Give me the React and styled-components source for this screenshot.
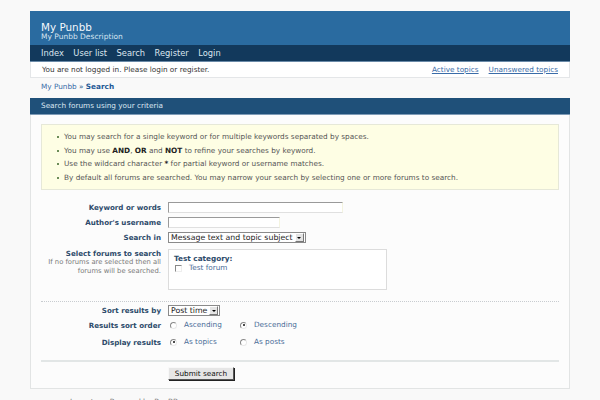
import React from 'react';
import styled, { createGlobalStyle } from 'styled-components';

const GlobalStyle = createGlobalStyle`
  html, body {
    margin: 0;
    padding: 0;
    background: #f9f9f9;
    font-family: "DejaVu Sans", Verdana, sans-serif;
    font-size: 7.3px;
    color: #333;
  }
`;

const Page = styled.div`
  width: 540px;
  margin: 0 auto;
  padding: 11px 0 0;
`;

const Header = styled.div`
  background: #2a6ba0;
  height: 34px;
  padding: 10px 11px 0;
  box-sizing: border-box;
  color: #fff;
`;

const Title = styled.div`
  font-size: 10.4px;
  line-height: 12px;
  font-weight: 500;
  color: #f4f8fc;
`;

const Tagline = styled.div`
  font-size: 7.5px;
  line-height: 8px;
  color: #d6e4f1;
`;

const Nav = styled.ul`
  display: flex;
  gap: 9.5px;
  margin: 0;
  padding: 0 11px;
  list-style: none;
  height: 16px;
  align-items: center;
  background: #12395c;
  border-bottom: 1px solid #6a8aa8;
  font-size: 8.3px;
  color: #dbe5ef;
`;

const StatusBar = styled.div`
  display: flex;
  align-items: center;
  height: 15px;
  padding: 0 11px;
  background: #fff;
  border: 1px solid #e4e6e8;
  border-top: none;
`;

const StatusLinks = styled.div`
  margin-left: auto;
  display: flex;
  gap: 10px;
`;

const Link = styled.a`
  color: ${(p) => (p.$strong ? '#1f5a96' : '#3a6ca8')};
  font-weight: ${(p) => (p.$strong ? 'bold' : 'normal')};
  text-decoration: ${(p) => (p.$under ? 'underline' : 'none')};
`;

const Crumbs = styled.div`
  padding: 0 11px;
  height: 20px;
  line-height: 17px;
  color: #2a5a90;
`;

const SectionHead = styled.div`
  background: #1f5079;
  height: 17px;
  line-height: 16px;
  padding: 0 11px;
  color: #dbe6f1;
  border-bottom: 1px solid #7e9bb6;
  box-sizing: border-box;
`;

const Box = styled.div`
  background: #fcfcfc;
  border: 1px solid #e2e4e4;
  border-top: none;
  padding: 9px 10px 8px;
`;

const InfoBox = styled.ul`
  margin: 0;
  padding: 5px 0 5px 22px;
  background: #fefee4;
  border: 1px solid #e6e8d8;
  list-style: none;
  color: #555;
`;

const InfoItem = styled.li`
  position: relative;
  line-height: 13.6px;
  &::before {
    content: '';
    position: absolute;
    left: -7px;
    top: 6px;
    width: 2px;
    height: 2px;
    background: #6c8c58;
  }
  b { color: #222; }
`;

const Form = styled.div`
  display: grid;
  grid-template-columns: 120px 1fr;
  column-gap: 7px;
  margin-top: 12px;
`;

const Label = styled.div`
  text-align: right;
  font-weight: bold;
  font-size: 7.1px;
  color: #2c4a6a;
  height: ${(p) => p.$h || 15}px;
  line-height: ${(p) => p.$lh || 11}px;
  white-space: nowrap;
`;

const Help = styled.div`
  font-weight: normal;
  color: #7a7a7a;
  font-size: 6.8px;
  line-height: 9px;
`;

const Field = styled.div`
  height: ${(p) => p.$h || 15}px;
  display: flex;
  align-items: flex-start;
`;

const TextInput = styled.input`
  box-sizing: border-box;
  width: ${(p) => p.$w}px;
  height: 11px;
  padding: 0;
  margin: 0;
  background: #fff;
  border: none;
  border-top: 1px solid #9a9a9a;
  border-left: 1px solid #9a9a9a;
  border-bottom: 1px solid #e0e0e0;
  border-right: 1px solid #f4f4e0;
  outline: none;
`;

const Select = styled.div`
  display: flex;
  align-items: center;
  box-sizing: border-box;
  height: 11px;
  padding-left: 2px;
  background: #fff;
  border: 1px solid #8a8a8a;
  color: #222;
  font-size: 7.8px;
  white-space: nowrap;
`;

const Arrow = styled.span`
  display: flex;
  align-items: center;
  justify-content: center;
  width: 7px;
  height: 7px;
  margin: 0 1px 0 2px;
  background: #e4e4e4;
  border: 1px solid;
  border-color: #fff #777 #777 #fff;
  &::after {
    content: '';
    border-left: 2px solid transparent;
    border-right: 2px solid transparent;
    border-top: 2px solid #000;
  }
`;

const ForumBox = styled.div`
  box-sizing: border-box;
  width: 219px;
  height: 41px;
  padding: 4px 5px;
  background: #fff;
  border: 1px solid #dcdcdc;
`;

const Category = styled.div`
  font-weight: bold;
  color: #2c4a6a;
  line-height: 9px;
`;

const Choice = styled.label`
  display: flex;
  align-items: center;
  gap: 7px;
  color: #4a6c98;
  line-height: 10px;
  min-width: ${(p) => p.$min || 0}px;
`;

const Check = styled.span`
  display: inline-block;
  width: 5px;
  height: 5px;
  margin-left: 1px;
  border: 1px solid;
  border-color: #888 #eee #eee #888;
  background: #fff;
`;

const Radio = styled.span`
  position: relative;
  display: inline-block;
  width: 5px;
  height: 5px;
  margin-left: 2px;
  border-radius: 50%;
  border: 1px solid;
  border-color: #888 #e8e8e8 #e8e8e8 #888;
  background: #fff;
  &::after {
    content: '';
    display: ${(p) => (p.$on ? 'block' : 'none')};
    position: absolute;
    left: 1.5px;
    top: 1.5px;
    width: 2px;
    height: 2px;
    border-radius: 50%;
    background: #111;
  }
`;

const Rule = styled.div`
  grid-column: 1 / -1;
  border-top: ${(p) => (p.$dotted ? '1px dotted #c8ccd0' : '2px solid #e2e6e6')};
  margin: ${(p) => (p.$dotted ? '10px 0 3px' : '11px 0 5px')};
`;

const Button = styled.button`
  font-family: inherit;
  font-size: 7.3px;
  color: #111;
  height: 13px;
  width: 66px;
  padding: 0;
  background: #e6e6e6;
  border: 1px solid;
  border-color: #f8f8f8 #555 #555 #f8f8f8;
  box-shadow: 1px 1px 0 #222;
`;

const Footer = styled.div`
  padding: 8px 40px 0;
  color: #777;
`;

const tips = [
  <>You may search for a single keyword or for multiple keywords separated by spaces.</>,
  <>You may use <b>AND</b>, <b>OR</b> and <b>NOT</b> to refine your searches by keyword.</>,
  <>Use the wildcard character <b>*</b> for partial keyword or username matches.</>,
  <>By default all forums are searched. You may narrow your search by selecting one or more forums to search.</>,
];

export default function App() {
  return (
    <Page>
      <GlobalStyle />
      <Header>
        <Title>My Punbb</Title>
        <Tagline>My Punbb Description</Tagline>
      </Header>
      <Nav>
        <li>Index</li>
        <li>User list</li>
        <li>Search</li>
        <li>Register</li>
        <li>Login</li>
      </Nav>
      <StatusBar>
        <span>You are not logged in. Please login or register.</span>
        <StatusLinks>
          <Link $under>Active topics</Link>
          <Link $under>Unanswered topics</Link>
        </StatusLinks>
      </StatusBar>
      <Crumbs>
        <Link>My Punbb</Link> » <Link $strong>Search</Link>
      </Crumbs>
      <SectionHead>Search forums using your criteria</SectionHead>
      <Box>
        <InfoBox>
          {tips.map((t, i) => (
            <InfoItem key={i}>{t}</InfoItem>
          ))}
        </InfoBox>
        <Form>
          <Label>Keyword or words</Label>
          <Field><TextInput $w={175} /></Field>

          <Label>Author's username</Label>
          <Field><TextInput $w={112} /></Field>

          <Label>Search in</Label>
          <Field $h={17}>
            <Select>Message text and topic subject<Arrow /></Select>
          </Field>

          <Label $h={42} $lh={9}>
            Select forums to search
            <Help>If no forums are selected then all<br />forums will be searched.</Help>
          </Label>
          <Field $h={42}>
            <ForumBox>
              <Category>Test category:</Category>
              <Choice><Check />Test forum</Choice>
            </ForumBox>
          </Field>

          <Rule $dotted />

          <Label>Sort results by</Label>
          <Field>
            <Select>Post time<Arrow /></Select>
          </Field>

          <Label $h={17}>Results sort order</Label>
          <Field $h={17}>
            <Choice $min={70}><Radio />Ascending</Choice>
            <Choice><Radio $on />Descending</Choice>
          </Field>

          <Label $h={12}>Display results</Label>
          <Field $h={12}>
            <Choice $min={70}><Radio $on />As topics</Choice>
            <Choice><Radio />As posts</Choice>
          </Field>

          <Rule />

          <div />
          <Field $h={13}>
            <Button>Submit search</Button>
          </Field>
        </Form>
      </Box>
      <Footer>Jump to &nbsp; &nbsp; Powered by PunBB</Footer>
    </Page>
  );
}
